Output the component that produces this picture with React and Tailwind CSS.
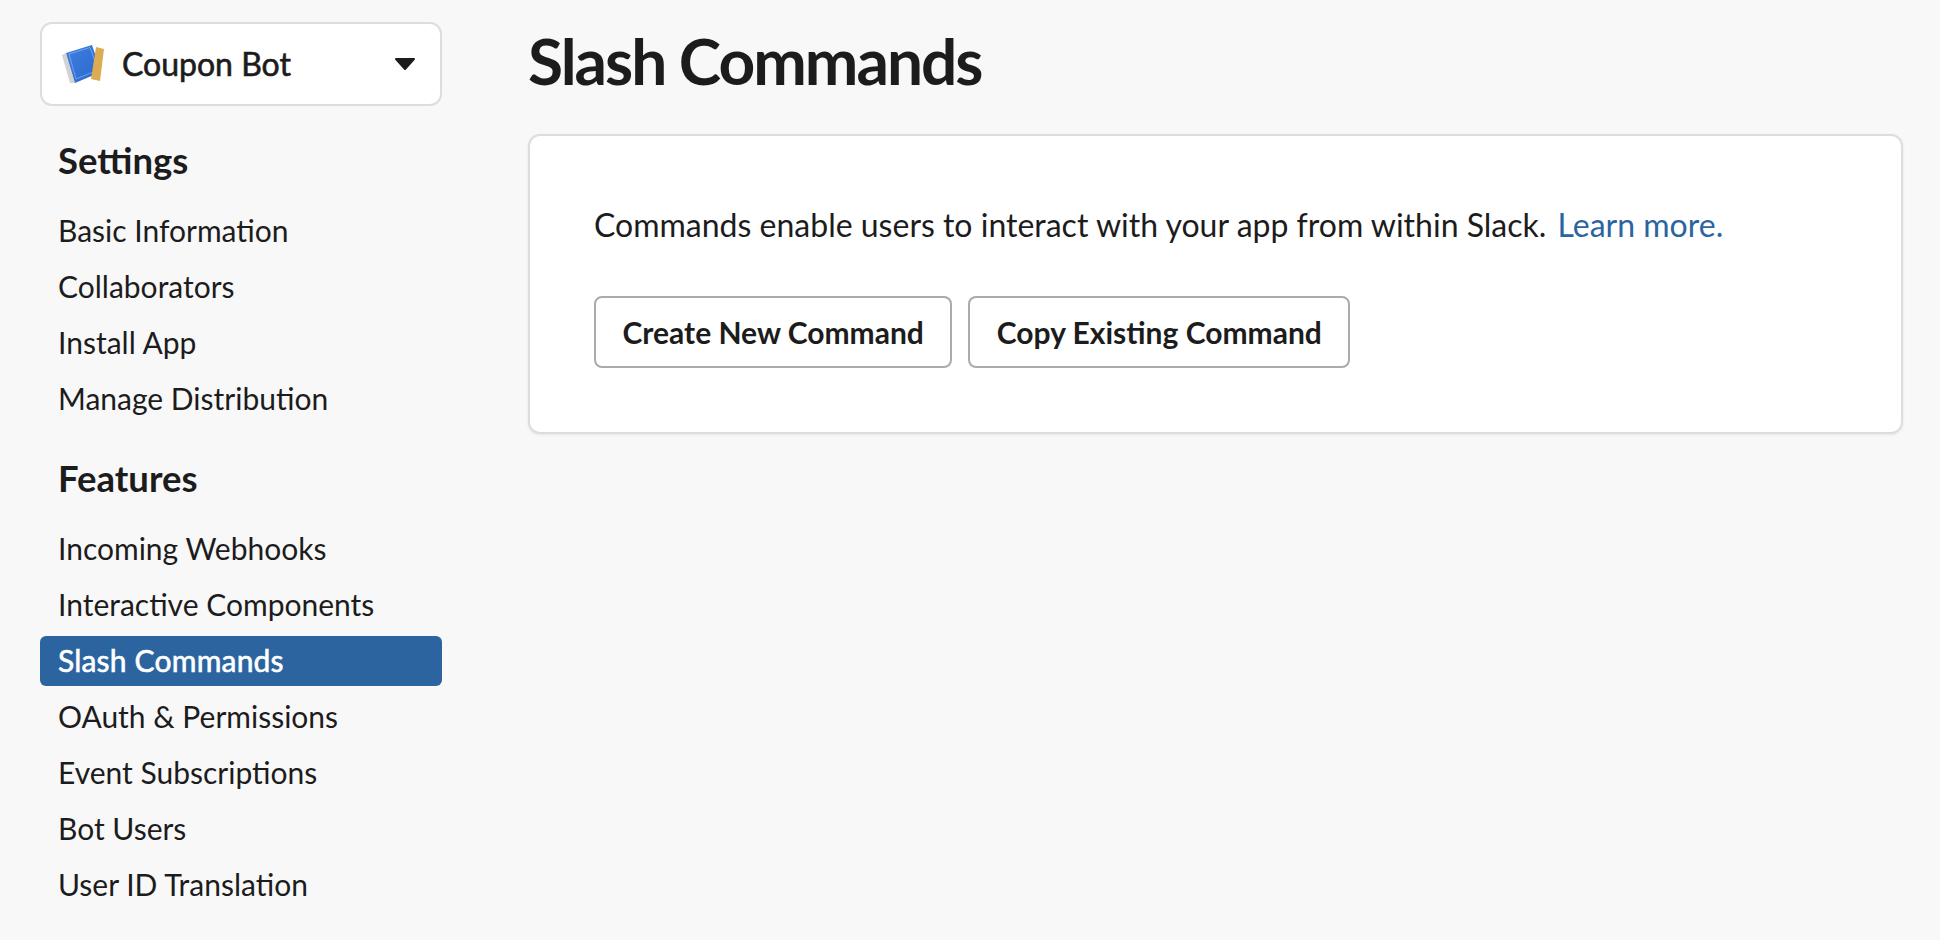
const settings = ['Basic Information', 'Collaborators', 'Install App', 'Manage Distribution'];
const features = ['Incoming Webhooks', 'Interactive Components', 'Slash Commands', 'OAuth & Permissions', 'Event Subscriptions', 'Bot Users', 'User ID Translation'];

function AppIcon() {
  return (
    <svg width="44" height="44" viewBox="0 0 44 44" className="shrink-0">
      <defs>
        <linearGradient id="cover" x1="0" y1="0" x2="1" y2="1">
          <stop offset="0" stopColor="#3f80de" />
          <stop offset="1" stopColor="#2a66cf" />
        </linearGradient>
      </defs>
      <path d="M1 13 L5 11 L14 41 L9 41 Z" fill="#d2d2d2" />
      <path d="M5 11 L31 3 L40 30 L14 41 Z" fill="url(#cover)" />
      <path d="M8 12 L29 5.5 L37 28 L15 37 Z" fill="none" stroke="#9cc0f0" strokeWidth="0.6" />
      <path d="M35 5 L43 7 L39 39 L30 37 Z" fill="#dcab52" />
    </svg>
  );
}

function Caret() {
  return (
    <svg width="22" height="14" viewBox="0 0 22 14" className="shrink-0">
      <path d="M2 2 H20 L11 12 Z" fill="#1d1c1d" stroke="#1d1c1d" strokeWidth="2" strokeLinejoin="round" />
    </svg>
  );
}

function NavItem({ label, active }) {
  return (
    <a className={`flex h-[50px] items-center rounded-md px-[18px] pb-px text-[30px] ${active ? 'bg-[#2c64a0] tracking-[0.2px] text-white [-webkit-text-stroke:0.6px_white]' : 'text-[#1d1c1d]'}`}>
      {label}
    </a>
  );
}

export default function App() {
  return (
    <div className="flex min-h-[940px] bg-[#f8f8f8] font-['Lato',sans-serif] text-[#1d1c1d] [font-variant-ligatures:common-ligatures]">
      {/* Sidebar */}
      <aside className="ml-10 mt-[22px] w-[402px] shrink-0">
        <div className="flex h-[84px] items-center rounded-xl border-2 border-[#dddddd] bg-white pl-[19px] pr-[24px]">
          <AppIcon />
          <span className="ml-[17px] flex-1 text-[32px] [-webkit-text-stroke:0.6px_#1d1c1d]">Coupon Bot</span>
          <Caret />
        </div>

        <h2 className="mt-[29px] px-[18px] text-[36.5px] font-bold leading-[50px]">Settings</h2>
        <nav className="mt-[21px] flex flex-col gap-1.5">
          {settings.map(item => <NavItem key={item} label={item} />)}
        </nav>

        <h2 className="mt-[29px] px-[18px] text-[36.5px] font-bold leading-[50px]">Features</h2>
        <nav className="mt-[21px] flex flex-col gap-1.5">
          {features.map(item => <NavItem key={item} label={item} active={item === 'Slash Commands'} />)}
        </nav>
      </aside>

      {/* Main */}
      <main className="ml-[86px] mr-[37px] flex-1">
        <h1 className="mt-[19px] text-[64px] font-bold leading-[84px] tracking-[-2px]">Slash Commands</h1>
        <section className="mt-[31px] h-[300px] rounded-xl border-2 border-[#dddddd] bg-white px-[64px] pt-[67px] shadow-[0_1px_3px_rgba(0,0,0,0.08)]">
          <p className="text-[32px] leading-[44px]">
            Commands enable users to interact with your app from within Slack.{' '}
            <a className="ml-[3px] text-[#2c64a0]">Learn more.</a>
          </p>
          <div className="mt-[49px] flex gap-4">
            <button className="h-[72px] rounded-lg border-2 border-[#aaaaaa] bg-white px-[26.5px] text-[30px] font-bold">Create New Command</button>
            <button className="h-[72px] rounded-lg border-2 border-[#aaaaaa] bg-white px-[26.5px] text-[30px] font-bold">Copy Existing Command</button>
          </div>
        </section>
      </main>
    </div>
  );
}
